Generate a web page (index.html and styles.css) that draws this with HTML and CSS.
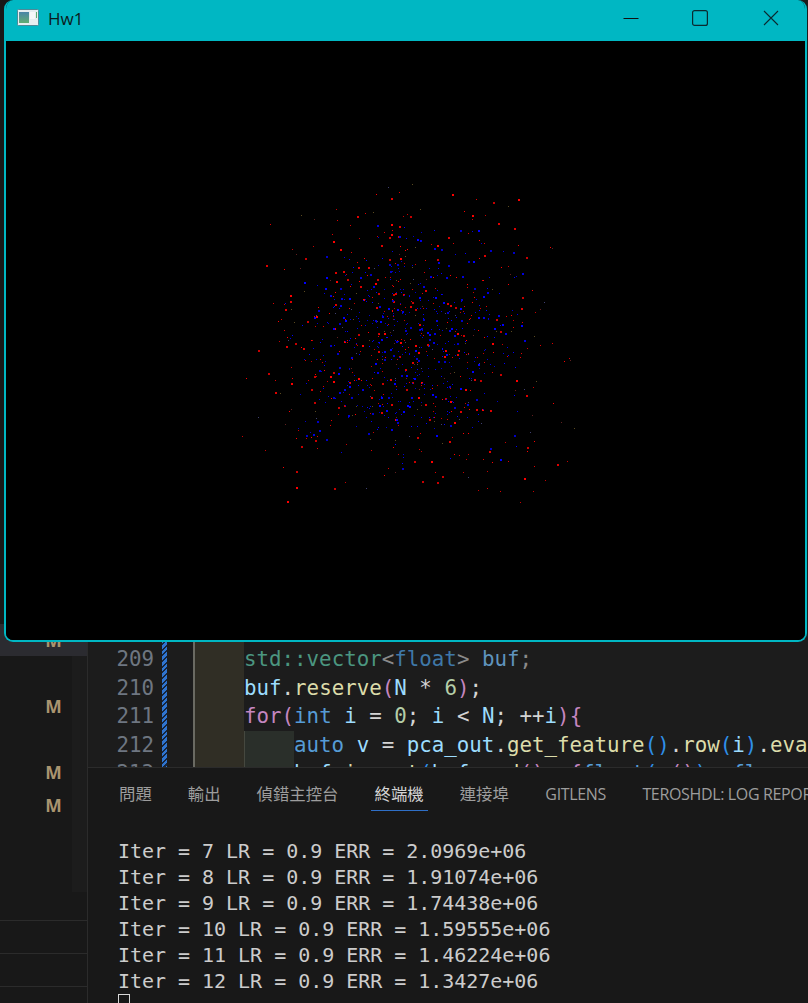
FILE: index.html
```html
<!DOCTYPE html>
<html lang="zh-Hant">
<head>
<meta charset="utf-8">
<title>Hw1</title>
<link rel="stylesheet" href="styles.css">
</head>
<body>
<div class="workbench">
  <aside class="sidebar">
    <div class="changes">
      <div class="file selected"><span class="badge">M</span></div>
      <div class="file"></div>
      <div class="file"><span class="badge">M</span></div>
      <div class="file"></div>
      <div class="file"><span class="badge">M</span></div>
      <div class="file"><span class="badge">M</span></div>
    </div>
    <div class="sections">
      <div class="section"></div>
      <div class="section"></div>
    </div>
  </aside>
  <main class="main">
    <section class="editor">
      <div class="gutter">
        <div class="ln">209</div>
        <div class="ln">210</div>
        <div class="ln">211</div>
        <div class="ln">212</div>
        <div class="ln">213</div>
      </div>
      <div class="git-strip"></div>
      <div class="code">
        <div class="row"><span class="indent"></span><span class="dim-g">std::vector</span><span class="dim-p">&lt;</span><span class="dim-k">float</span><span class="dim-p">&gt; </span><span class="dim-v">buf</span><span class="dim-p">;</span></div>
        <div class="row"><span class="indent"></span><span class="v">buf</span><span class="p">.</span><span class="f">reserve</span><span class="m">(</span><span class="v">N</span><span class="p"> * </span><span class="n">6</span><span class="m">)</span><span class="p">;</span></div>
        <div class="row"><span class="indent"></span><span class="m">for(</span><span class="k">int</span><span class="p"> </span><span class="v">i</span><span class="p"> = </span><span class="n">0</span><span class="p">; </span><span class="v">i</span><span class="p"> &lt; </span><span class="v">N</span><span class="p">; ++</span><span class="v">i</span><span class="m">){</span></div>
        <div class="row"><span class="indent"></span><span class="indent2"></span><span class="k">auto</span><span class="p"> </span><span class="v">v</span><span class="p"> = </span><span class="v">pca_out</span><span class="p">.</span><span class="f">get_feature</span><span class="b">()</span><span class="p">.</span><span class="f">row</span><span class="b">(</span><span class="v">i</span><span class="b">)</span><span class="p">.</span><span class="f">eval</span><span class="b">()</span></div>
        <div class="row"><span class="indent"></span><span class="indent2"></span><span class="v">buf</span><span class="p">.</span><span class="f">insert</span><span class="b">(</span><span class="v">buf</span><span class="p">.</span><span class="f">end</span><span class="m">()</span><span class="p">, </span><span class="m">{</span><span class="k">float</span><span class="b">(</span><span class="v">v</span><span class="m">()</span><span class="b">)</span><span class="p">, </span><span class="k">fl</span></div>
      </div>
    </section>
    <section class="panel">
      <nav class="tabs">
        <span class="tab">問題</span>
        <span class="tab">輸出</span>
        <span class="tab">偵錯主控台</span>
        <span class="tab active">終端機</span>
        <span class="tab">連接埠</span>
        <span class="tab latin">GITLENS</span>
        <span class="tab latin">TEROSHDL: LOG REPORT</span>
      </nav>
      <div class="terminal">
        <div class="line">Iter = 7 LR = 0.9 ERR = 2.0969e+06</div>
        <div class="line">Iter = 8 LR = 0.9 ERR = 1.91074e+06</div>
        <div class="line">Iter = 9 LR = 0.9 ERR = 1.74438e+06</div>
        <div class="line">Iter = 10 LR = 0.9 ERR = 1.59555e+06</div>
        <div class="line">Iter = 11 LR = 0.9 ERR = 1.46224e+06</div>
        <div class="line">Iter = 12 LR = 0.9 ERR = 1.3427e+06</div>
        <div class="cursor"></div>
      </div>
    </section>
  </main>
</div>

<div class="window">
  <header class="titlebar">
    <svg class="app-icon" width="22" height="17" viewBox="0 0 22 17">
      <defs>
        <linearGradient id="pane" x1="0" y1="0" x2="0" y2="1">
          <stop offset="0" stop-color="#4a86a8"/>
          <stop offset="1" stop-color="#62ad72"/>
        </linearGradient>
      </defs>
      <rect x="0.5" y="0.5" width="21" height="16" rx="1" fill="#e6eef0" stroke="#4d8a98"/>
      <rect x="2" y="3" width="10" height="11" fill="url(#pane)"/>
      <rect x="13" y="3" width="5" height="7" fill="#f6f8f8"/>
      <rect x="19" y="3" width="1" height="6" fill="#5fae70"/>
    </svg>
    <span class="title">Hw1</span>
    <div class="controls">
      <svg class="ctl" width="16" height="16" viewBox="0 0 16 16"><path d="M0.5 8.5H15.5" stroke="#111" fill="none"/></svg>
      <svg class="ctl" width="16" height="16" viewBox="0 0 16 16"><rect x="0.6" y="0.6" width="14.8" height="14.8" rx="2" stroke="#0a2a30" stroke-width="1.2" fill="none"/></svg>
      <svg class="ctl close" width="16" height="16" viewBox="0 0 16 16"><path d="M1 1L15 15M15 1L1 15" stroke="#0a2a30" stroke-width="1.1" fill="none"/></svg>
    </div>
  </header>
  <canvas class="viewport" id="scatter" width="800" height="600"></canvas>
</div>
<script src="scatter.js"></script>
</body>
</html>
```
FILE: styles.css
```css
* { box-sizing: border-box; }
html, body { margin: 0; height: 100%; }
body {
  background: #181818;
  overflow: hidden;
  width: 808px;
  height: 1003px;
  position: relative;
}
.workbench {
  display: grid;
  grid-template-columns: 88px 720px;
  height: 1003px;
}
.sidebar {
  border-right: 1px solid #2b2b2b;
  padding-top: 624px;
  display: flex;
  flex-direction: column;
  background: #181818;
}
.changes {
  height: 268px;
  background: linear-gradient(to right, transparent 72px, #1c1c1c 72px);
}
.file {
  height: 33px;
  display: flex;
  align-items: center;
  justify-content: center;
  padding-left: 20px;
}
.file.selected { background: #2b2b30; height: 32px; margin-bottom: 1px; }
.badge {
  font: 700 17.5px "Open Sans", "Noto Sans", sans-serif;
  color: #a9946f;
  line-height: 33px;
}
.sections { margin-top: 28px; }
.section {
  height: 33px;
  border-top: 1px solid #2b2b2b;
}
.section:last-child { height: 34px; border-bottom: 1px solid #2b2b2b; }

.main { display: flex; flex-direction: column; min-width: 0; }
.editor {
  height: 767px;
  display: flex;
  overflow: hidden;
  padding-top: 645px;
  background: #1c1c1c;
}
.gutter {
  width: 66px;
  font: 20.8px/28.5px "DejaVu Sans Mono", monospace;
  color: #6e7681;
  text-align: right;
}
.git-strip {
  width: 5px;
  margin: -5px 0 0 8px;
  height: 130px;
  background: repeating-linear-gradient(135deg, #2f74d0 0 2.5px, #16263c 2.5px 4px);
}
.code {
  flex: 1;
  min-width: 0;
  margin-left: 26px;
  overflow: hidden;
  margin-top: -3px;
  padding-top: 3px;
  background: linear-gradient(to right, #6a6a62 1.5px, #302e25 1.5px, #302e25 51px, transparent 51px);
}
.row {
  height: 28.5px;
  font: 20.8px/28.5px "DejaVu Sans Mono", monospace;
  white-space: pre;
  display: flex;
  color: #d4d4d4;
}
.indent { width: 51px; flex: none; }
.indent2 {
  width: 50px;
  flex: none;
  background: #2a2f2a;
  border-left: 1.5px solid #45483f;
}
.dim-g { color: #4b9680; }
.dim-p { color: #8a8a8a; }
.dim-k { color: #3f78a8; }
.dim-v { color: #5f93bd; }
.v { color: #9cdcfe; }
.p { color: #d4d4d4; }
.f { color: #dcdcaa; }
.m { color: #c586c0; }
.n { color: #b5cea8; }
.k { color: #569cd6; }
.b { color: #2f8fe8; }

.panel {
  height: 236px;
  border-top: 1px solid #2b2b2b;
  background: #181818;
  overflow: hidden;
}
.tabs {
  display: flex;
  gap: 28px;
  height: 43px;
  padding-left: 27px;
  white-space: nowrap;
  font: 16.4px/52px "Open Sans", "Noto Sans CJK TC", sans-serif;
  color: #9d9d9d;
}
.tab { height: 43px; padding: 0 4px; flex: none; }
.tab.latin { font-size: 16px; letter-spacing: -0.35px; padding-left: 4.5px; }
.tab.active {
  color: #d4d4d4;
  border-bottom: 1px solid #2f6fc7;
}
.terminal {
  padding: 27px 0 0 30px;
  font: 20px/26px "DejaVu Sans Mono", monospace;
  color: #cccccc;
  letter-spacing: -0.03px;
}
.line { height: 26px; white-space: pre; }
.cursor {
  width: 12px;
  height: 26px;
  border: 1.5px solid #d8d8d8;
}

.window {
  position: absolute;
  left: 4px;
  top: 0;
  width: 803px;
  height: 642px;
  background: #000;
  border: 2px solid #00b7c3;
  border-top: 0;
  border-radius: 9px;
  overflow: hidden;
  display: flex;
  flex-direction: column;
}
.titlebar {
  flex: none;
  height: 41px;
  background: #00b7c3;
  display: flex;
  align-items: center;
  padding: 0 26px 0 11px;
}
.app-icon { margin-top: -7px; flex: none; }
.title {
  margin: 0 0 0 9px;
  padding-bottom: 5px;
  font: 17px "Open Sans", "Noto Sans", sans-serif;
  color: #0c1a1c;
}
.controls {
  margin-left: auto;
  display: flex;
  gap: 53px;
  padding-bottom: 5px;
}
.ctl { display: block; }
.ctl.close { margin-left: 2px; }
.viewport { display: block; width: 800px; height: 600px; background: #000; }
```
FILE: scatter.js
```js
// Seeded scatter of two classes of PCA points, drawn pixel by pixel.
(function () {
  var canvas = document.getElementById('scatter');
  var ctx = canvas.getContext('2d');
  var seed = 20240607;
  function rnd() {
    seed = (seed * 1664525 + 1013904223) >>> 0;
    return seed / 4294967296;
  }
  function tri() {
    return rnd() + rnd() - 1;
  }
  // Canvas origin in page coordinates is (6, 41).
  var cx = 400, cy = 304;
  function plot(n, sx, sy, colors, bigShare) {
    for (var i = 0; i < n; i++) {
      var x = Math.round(cx + tri() * sx);
      var y = Math.round(cy + tri() * sy);
      ctx.fillStyle = colors[Math.floor(rnd() * colors.length)];
      var big = rnd() < bigShare ? 2 : 1;
      ctx.fillRect(x, y, big, big);
    }
  }
  plot(110, 175, 175, ['#5a4a20', '#404070', '#602020'], 0);
  plot(420, 170, 165, ['#ff0000', '#e00000', '#c80000'], 0.3);
  plot(520, 125, 125, ['#0000ff', '#0000e0', '#0000c8'], 0.3);
})();
```
